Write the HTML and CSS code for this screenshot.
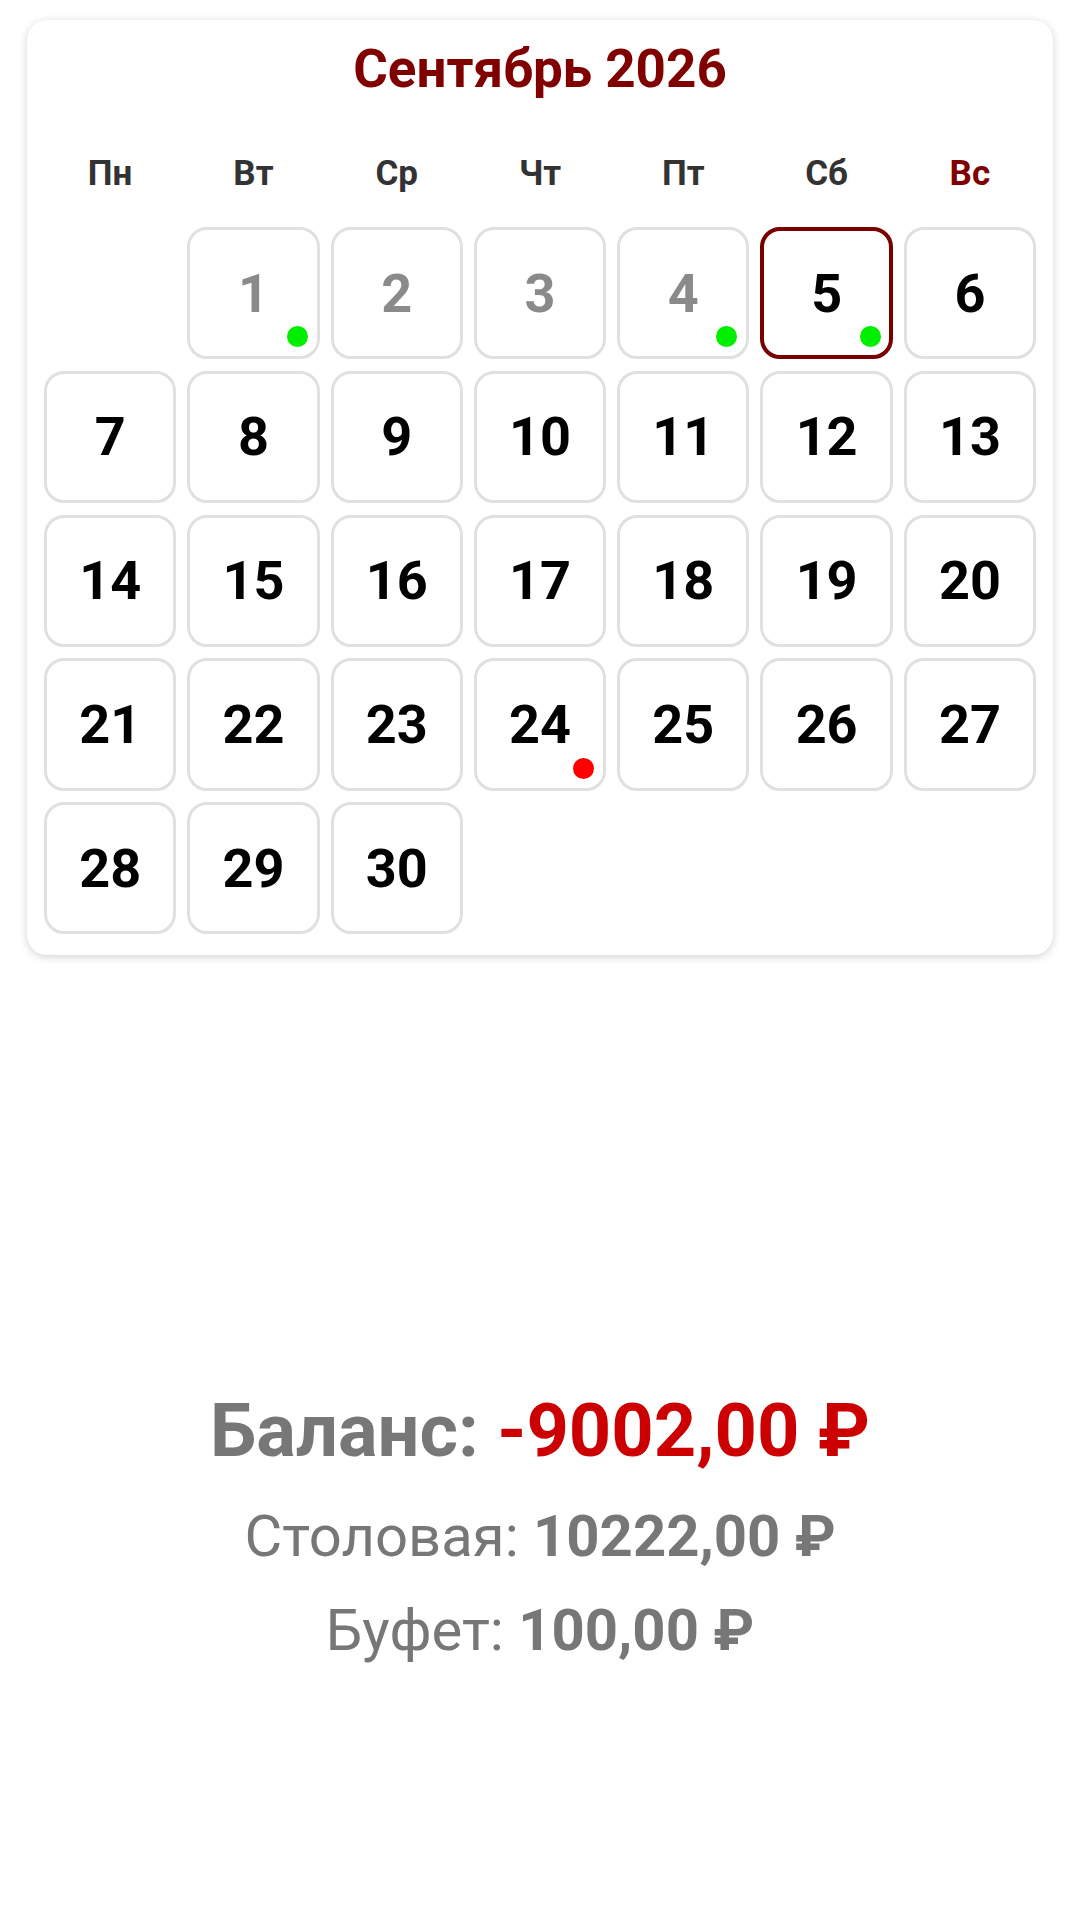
FILE: index.html
```html
<!DOCTYPE html>
<html lang="ru">
<head>
  <meta charset="UTF-8">
  <meta name="viewport" content="width=device-width, initial-scale=1.0">
  <title>Календарь питания</title>
  <link rel="stylesheet" href="styles.css">
</head>
<body>
  <div class="calendar">
    <h1 class="month-title">Сентябрь 2026</h1>
    <div class="weekdays">
      <div>Пн</div>
      <div>Вт</div>
      <div>Ср</div>
      <div>Чт</div>
      <div>Пт</div>
      <div>Сб</div>
      <div class="sunday">Вс</div>
    </div>
    <div class="days">
      <div class="day empty"></div>
      <div class="day past">1<span class="dot paid"></span></div>
      <div class="day past">2</div>
      <div class="day past">3</div>
      <div class="day past">4<span class="dot paid"></span></div>
      <div class="day today">5<span class="dot paid"></span></div>
      <div class="day">6</div>
      <div class="day">7</div>
      <div class="day">8</div>
      <div class="day">9</div>
      <div class="day">10</div>
      <div class="day">11</div>
      <div class="day">12</div>
      <div class="day">13</div>
      <div class="day">14</div>
      <div class="day">15</div>
      <div class="day">16</div>
      <div class="day">17</div>
      <div class="day">18</div>
      <div class="day">19</div>
      <div class="day">20</div>
      <div class="day">21</div>
      <div class="day">22</div>
      <div class="day">23</div>
      <div class="day">24<span class="dot debt"></span></div>
      <div class="day">25</div>
      <div class="day">26</div>
      <div class="day">27</div>
      <div class="day">28</div>
      <div class="day">29</div>
      <div class="day">30</div>
    </div>
  </div>

  <div class="balance">
    <div class="balance-total">Баланс: <span class="negative">-9002,00 ₽</span></div>
    <div class="balance-line">Столовая: <b>10222,00 ₽</b></div>
    <div class="balance-line">Буфет: <b>100,00 ₽</b></div>
  </div>
</body>
</html>
```

FILE: styles.css
```css
body {
  font-family: Roboto, "Noto Sans", Arial, sans-serif;
  background-color: #fff;
  margin: 0;
  padding: 0;
}

.calendar {
  margin: 20px 27px 0;
  padding: 18px 17px 21px;
  background: #fff;
  border-radius: 20px;
  box-shadow: 0 2px 8px rgba(0,0,0,0.18);
}

.month-title {
  margin: 0;
  font-size: 53px;
  line-height: 62px;
  font-weight: bold;
  color: #800000;
  text-align: center;
}

.weekdays {
  display: grid;
  grid-template-columns: repeat(7, 1fr);
  column-gap: 11px;
  margin-top: 54px;
  height: 40px;
  line-height: 40px;
  font-size: 35px;
  font-weight: bold;
  color: #333;
  text-align: center;
}

.weekdays .sunday {
  color: #800000;
}

.days {
  display: grid;
  grid-template-columns: repeat(7, 1fr);
  column-gap: 11px;
  row-gap: 11.5px;
  margin-top: 33px;
}

.day {
  position: relative;
  aspect-ratio: 1;
  display: flex;
  align-items: center;
  justify-content: center;
  border: 3px solid #e0e0e0;
  border-radius: 20px;
  box-sizing: border-box;
  font-size: 54px;
  font-weight: bold;
  color: #000;
}

.day.empty {
  border: none;
}

.day.past {
  color: #8a8a8a;
}

.day.today {
  border: 4px solid #7a0000;
}

.dot {
  position: absolute;
  right: 9px;
  bottom: 9px;
  width: 21px;
  height: 21px;
  border-radius: 50%;
}

.day.today .dot {
  right: 8px;
  bottom: 8px;
}

.dot.paid {
  background-color: #00ee00;
}

.dot.debt {
  background-color: #ff0000;
}

.balance {
  margin-top: 418px;
  text-align: center;
  color: #777;
}

.balance-total {
  font-size: 74px;
  font-weight: bold;
  line-height: 116px;
}

.negative {
  color: #cc0000;
}

.balance-line {
  font-size: 58px;
  line-height: 94px;
}

.balance-line b {
  font-weight: bold;
}
```
